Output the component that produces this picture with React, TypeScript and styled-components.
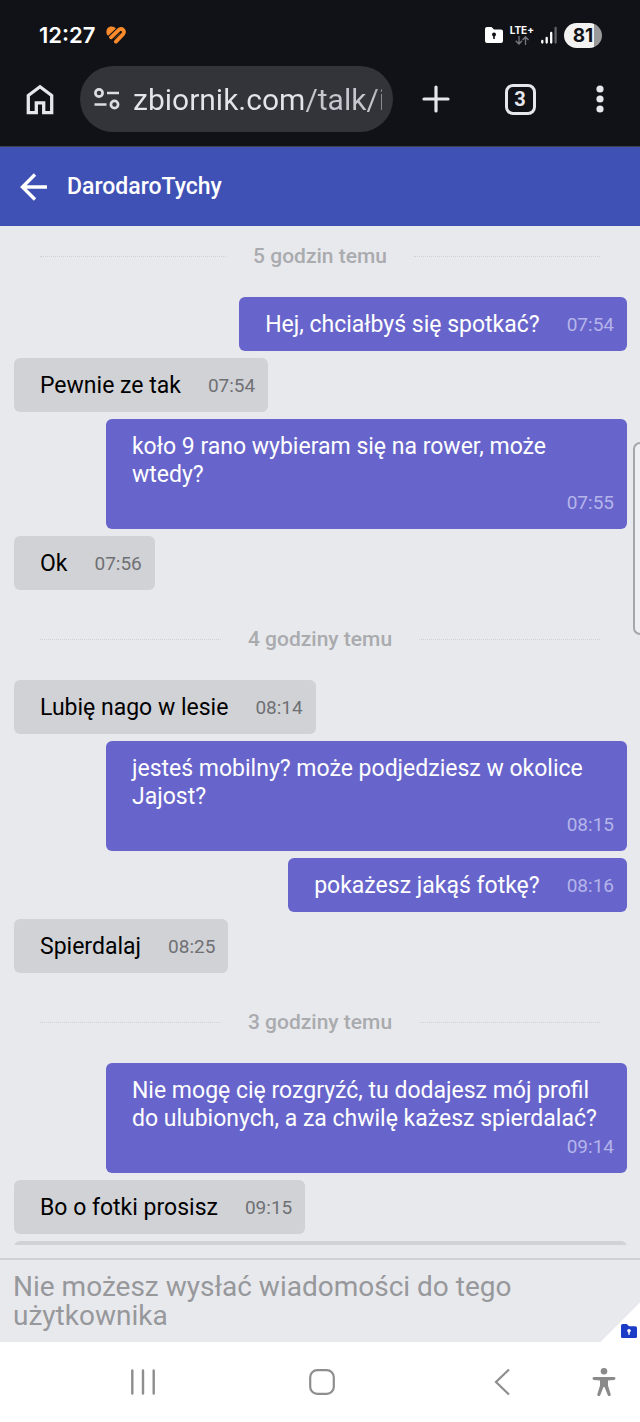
import React from "react";
import styled, { createGlobalStyle } from "styled-components";

const GlobalStyle = createGlobalStyle`
  * { box-sizing: border-box; }
  body {
    margin: 0;
    background: #e8e9ed;
    font-family: Roboto, "Noto Sans", sans-serif;
    font-size: 23px;
    line-height: 28px;
  }
  button, input, textarea { font: inherit; border: 0; padding: 0; margin: 0; }
  button { background: none; display: flex; align-items: center; justify-content: center; cursor: pointer; }
  svg { display: block; flex: none; }
`;

const Screen = styled.div`
  position: relative;
  min-height: 100vh;
  display: flex;
  flex-direction: column;
`;

const BrowserChrome = styled.div`
  background: #111217;
  border-bottom: 1px solid #40424f;
  padding-bottom: 14px;
`;

const StatusBar = styled.div`
  display: flex;
  align-items: center;
  gap: 11px;
  padding: 21px 38px 17px 39px;
  color: #fff;
  font-family: Inter, sans-serif;
`;

const Clock = styled.time`
  font-size: 22px;
  font-weight: 600;
`;

const StatusIcons = styled.div`
  margin-left: auto;
  display: flex;
  align-items: center;
  gap: 7px;
`;

const Network = styled.div`
  display: flex;
  flex-direction: column;
  align-items: center;
  font-size: 10px;
  line-height: 11px;
  font-weight: 700;
`;

const Battery = styled.div`
  width: 38px;
  height: 25px;
  border-radius: 13px;
  background: linear-gradient(90deg, #f2f2f2 30px, #999 30px);
  color: #111217;
  font-size: 19px;
  line-height: 25px;
  font-weight: 700;
  text-align: center;
`;

const Toolbar = styled.div`
  display: flex;
  align-items: center;
  padding: 0 16px 0 20px;
`;

const ToolButton = styled.button<{ $width: number }>`
  width: ${(p) => p.$width}px;
  height: 48px;
  flex: none;
`;

const TabCount = styled.span`
  width: 31px;
  height: 31px;
  border: 3px solid #e6e6ec;
  border-radius: 8px;
  color: #e6e6ec;
  font-size: 20px;
  line-height: 25px;
  font-weight: 700;
`;

const AddressBar = styled.label`
  flex: 1;
  min-width: 0;
  height: 66px;
  margin: 0 15px 0 20px;
  padding: 0 11px 0 14px;
  display: flex;
  align-items: center;
  gap: 13px;
  border-radius: 33px;
  background: #333439;
`;

const AddressInput = styled.input`
  flex: 1;
  min-width: 0;
  height: 42px;
  font-size: 30px;
  outline: 0;
  color: transparent;
  background: linear-gradient(90deg, #e4e4ea 173px, #c6c6cf 173px, #c6c6cf 240px, #8a8b92);
  background-clip: text;
`;

const ChatHeader = styled.header`
  height: 79px;
  padding: 0 20px;
  display: flex;
  align-items: center;
  gap: 19px;
  background: #3f51b5;
  color: #fff;
`;

const ChatTitle = styled.h1`
  margin: 0;
  font-size: 23px;
  font-weight: 500;
`;

const Messages = styled.main`
  flex: 1;
  padding: 16px 13px 13px 14px;
  display: flex;
  flex-direction: column;
`;

const Group = styled.section`
  display: flex;
  flex-direction: column;
  gap: 7px;
  & + & { margin-top: 35px; }
`;

const GroupHeading = styled.h2`
  margin: 0 27px 20px 26px;
  display: flex;
  align-items: center;
  gap: 27px;
  color: #aaabae;
  font-size: 21px;
  font-weight: 500;
  &::before, &::after {
    content: "";
    flex: 1;
    border-top: 1px dotted #cfd0d4;
  }
`;

const Bubble = styled.article<{ $mine?: boolean }>`
  align-self: ${(p) => (p.$mine ? "flex-end" : "flex-start")};
  max-width: 85%;
  padding: 14px 13px 12px 26px;
  display: flex;
  flex-wrap: wrap;
  column-gap: 27px;
  border-radius: 6px;
  background: ${(p) => (p.$mine ? "#6765cb" : "#d1d2d6")};
  color: ${(p) => (p.$mine ? "#fff" : "#000")};
`;

const BubbleText = styled.p`
  margin: 0;
`;

const BubbleTime = styled.time<{ $mine?: boolean }>`
  margin-left: auto;
  font-size: 19px;
  color: ${(p) => (p.$mine ? "#b5b4ea" : "#6f7074")};
`;

const NextBubble = styled.div`
  height: 4px;
  overflow: hidden;
  &::before {
    content: "";
    display: block;
    height: 54px;
    border-radius: 6px;
    background: #d1d2d6;
  }
`;

const Composer = styled.footer`
  position: relative;
  border-top: 2px solid #cfd0d4;
`;

const ComposerInput = styled.textarea`
  display: block;
  width: 100%;
  height: 82px;
  padding: 12px 100px 12px 13px;
  resize: none;
  overflow: hidden;
  background: transparent;
  font-size: 28px;
  line-height: 29px;
  &::placeholder { color: #97989b; opacity: 1; }
`;

const CornerFold = styled.div`
  position: absolute;
  right: 0;
  bottom: 0;
  width: 39px;
  height: 39px;
  padding: 21px 3px 0 20px;
  background: linear-gradient(135deg, transparent 50%, #fff 50%);
`;

const EdgeHandle = styled.div`
  position: absolute;
  top: 442px;
  right: 0;
  width: 7px;
  height: 193px;
  border: 2px solid #a5a6ab;
  border-right: 0;
  border-radius: 8px 0 0 8px;
  background: #eeeff3;
`;

const NavBar = styled.nav`
  height: 80px;
  display: grid;
  grid-template-columns: 53px 1fr 1fr 1fr 48px;
  align-items: center;
  background: #fff;
  & > button { height: 60px; }
  & > button:first-child { grid-column: 2; }
  & > button:last-child { justify-content: flex-start; }
`;

type Message = { text: string; time: string; mine?: boolean };

const groups: { label: string; messages: Message[] }[] = [
  {
    label: "5 godzin temu",
    messages: [
      { text: "Hej, chciałbyś się spotkać?", time: "07:54", mine: true },
      { text: "Pewnie ze tak", time: "07:54" },
      { text: "koło 9 rano wybieram się na rower, może wtedy?", time: "07:55", mine: true },
      { text: "Ok", time: "07:56" },
    ],
  },
  {
    label: "4 godziny temu",
    messages: [
      { text: "Lubię nago w lesie", time: "08:14" },
      { text: "jesteś mobilny? może podjedziesz w okolice Jajost?", time: "08:15", mine: true },
      { text: "pokażesz jakąś fotkę?", time: "08:16", mine: true },
      { text: "Spierdalaj", time: "08:25" },
    ],
  },
  {
    label: "3 godziny temu",
    messages: [
      {
        text: "Nie mogę cię rozgryźć, tu dodajesz mój profil do ulubionych, a za chwilę każesz spierdalać?",
        time: "09:14",
        mine: true,
      },
      { text: "Bo o fotki prosisz", time: "09:15" },
    ],
  },
];

const FolderIcon = ({ width, color, hole }: { width: number; color: string; hole: string }) => (
  <svg width={width} height={(width * 16) / 18} viewBox="0 0 18 16" aria-hidden="true">
    <path d="M2 0h4.500l2.500 2.500h7a2 2 0 0 1 2 2V14a2 2 0 0 1-2 2H2a2 2 0 0 1-2-2V2a2 2 0 0 1 2-2z" fill={color} />
    <circle cx="9" cy="7.500" r="2" fill={hole} />
    <path d="M8.200 8h1.600v4H8.200z" fill={hole} />
  </svg>
);

const HeartIcon = () => (
  <svg width="21" height="18" viewBox="0 0 21 18" fill="none" aria-hidden="true">
    <path d="M.8 8.200C-.5 4 1.800.6 5.500.6c2 0 3.500.8 4.400 1.900L2.500 9.600C1.700 9.500 1 9 .8 8.200z" fill="#fb8b2a" />
    <path
      d="M5 11.300L12.800 3.900a3 3 0 0 1 4.300 4.200L9.900 15.600"
      stroke="#fb8b2a"
      strokeWidth="3.800"
      strokeLinecap="round"
    />
    <path d="M8.300 12.600l5.300-5.200" stroke="#fb8b2a" strokeWidth="1" strokeLinecap="round" opacity=".35" />
  </svg>
);

export default function App() {
  return (
    <Screen>
      <GlobalStyle />
      <BrowserChrome>
        <StatusBar>
          <Clock>12:27</Clock>
          <HeartIcon />
          <StatusIcons>
            <FolderIcon width={18} color="#fff" hole="#111217" />
            <Network>
              LTE+
              <svg width="14" height="9" viewBox="0 0 14 9" fill="none" stroke="#77787d" strokeWidth="1.300" aria-hidden="true">
                <path d="M4 0v8M.7 4.800L4 8l3-3.200M10.500 9V1M7.500 4l3-3.200L13.500 4" />
              </svg>
            </Network>
            <svg width="16" height="18" viewBox="0 0 16 18" strokeWidth="2.300" strokeLinecap="round" aria-hidden="true">
              <path d="M1.300 15v1.500M5.700 12v4.500M10.200 7v9.500" stroke="#fff" />
              <path d="M14.600 2v14.500" stroke="#626368" />
            </svg>
            <Battery>81</Battery>
          </StatusIcons>
        </StatusBar>
        <Toolbar>
          <ToolButton $width={40} aria-label="Strona główna">
            <svg width="28" height="31" viewBox="0 0 28 31" fill="none" stroke="#e6e6ec" strokeWidth="3.300">
              <path d="M2.300 28.700V11.500L14 2.800l11.700 8.700v17.200h-8v-9.900h-7.400v9.900z" />
            </svg>
          </ToolButton>
          <AddressBar>
            <svg width="26" height="22" viewBox="0 0 26 22" fill="none" stroke="#dcdce2" strokeWidth="2.700" aria-hidden="true">
              <circle cx="5" cy="5" r="3.600" />
              <circle cx="20.500" cy="16.500" r="3.600" />
              <path d="M13 5h12M.5 16.500h12" />
            </svg>
            <AddressInput aria-label="Adres strony" readOnly value="zbiornik.com/talk/i" />
          </AddressBar>
          <ToolButton $width={56} aria-label="Nowa karta">
            <svg width="28" height="28" viewBox="0 0 28 28" stroke="#e6e6ec" strokeWidth="3.200" strokeLinecap="round">
              <path d="M14 2v24M2 14h24" />
            </svg>
          </ToolButton>
          <ToolButton $width={112} aria-label="Karty">
            <TabCount>3</TabCount>
          </ToolButton>
          <ToolButton $width={48} aria-label="Menu">
            <svg width="8" height="28" viewBox="0 0 8 28" fill="#e6e6ec">
              <circle cx="4" cy="4" r="3.600" />
              <circle cx="4" cy="14" r="3.600" />
              <circle cx="4" cy="24" r="3.600" />
            </svg>
          </ToolButton>
        </Toolbar>
      </BrowserChrome>

      <ChatHeader>
        <button aria-label="Wstecz">
          <svg width="28" height="28" viewBox="0 0 28 28" fill="none" stroke="#fff" strokeWidth="3.400">
            <path d="M27 14H3M15 1.500L2.500 14 15 26.500" />
          </svg>
        </button>
        <ChatTitle>DarodaroTychy</ChatTitle>
      </ChatHeader>

      <Messages>
        {groups.map((group) => (
          <Group key={group.label}>
            <GroupHeading>{group.label}</GroupHeading>
            {group.messages.map((m) => (
              <Bubble key={m.text} $mine={m.mine}>
                <BubbleText>{m.text}</BubbleText>
                <BubbleTime $mine={m.mine}>{m.time}</BubbleTime>
              </Bubble>
            ))}
            {group === groups[groups.length - 1] && <NextBubble />}
          </Group>
        ))}
      </Messages>

      <Composer>
        <ComposerInput
          disabled
          aria-label="Wiadomość"
          placeholder="Nie możesz wysłać wiadomości do tego użytkownika"
        />
        <CornerFold>
          <FolderIcon width={16} color="#1c3cc8" hole="#fff" />
        </CornerFold>
      </Composer>

      <NavBar>
        <button aria-label="Ostatnie aplikacje">
          <svg width="26" height="26" viewBox="0 0 26 26" stroke="#8e8e8e" strokeWidth="2.400" strokeLinecap="round">
            <path d="M2.300 1.500v23M13 1.500v23M23.700 1.500v23" />
          </svg>
        </button>
        <button aria-label="Ekran główny">
          <svg width="26" height="26" viewBox="0 0 26 26" fill="none" stroke="#8e8e8e" strokeWidth="2.200">
            <rect x="1.200" y="1.200" width="23.600" height="23.600" rx="7" />
          </svg>
        </button>
        <button aria-label="Cofnij">
          <svg width="16" height="28" viewBox="0 0 16 28" fill="none" stroke="#8e8e8e" strokeWidth="2.200">
            <path d="M15 1.500L2 14l13 12.500" />
          </svg>
        </button>
        <button aria-label="Ułatwienia dostępu">
          <svg width="24" height="28" viewBox="0 0 24 28" fill="#8a8a8a">
            <circle cx="12" cy="3.300" r="3.300" />
            <path d="M2 9h20a1.400 1.400 0 0 1 0 2.900l-6 .6v5l2.600 8.600a1.500 1.500 0 0 1-2.900 1L12.500 19h-1l-3.200 8.100a1.500 1.500 0 0 1-2.900-1L8 17.500v-5l-6-.6A1.400 1.400 0 0 1 2 9z" />
          </svg>
        </button>
      </NavBar>
      <EdgeHandle />
    </Screen>
  );
}
